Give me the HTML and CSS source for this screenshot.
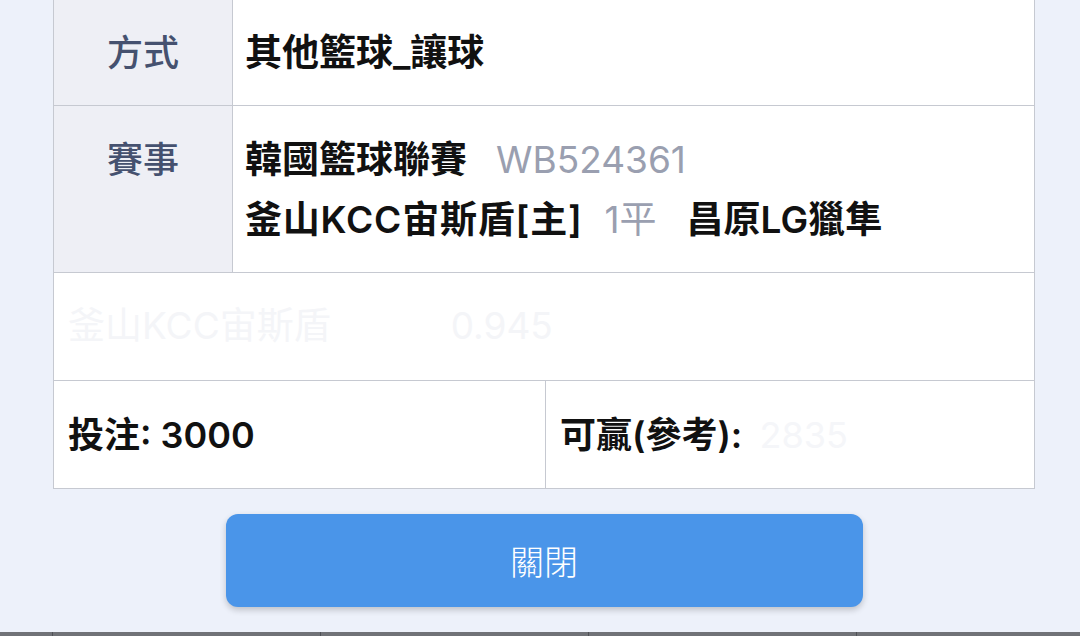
FILE: index.html
```html
<!DOCTYPE html>
<html lang="zh-Hant">
<head>
    <meta charset="UTF-8">
    <meta name="viewport" content="width=device-width, initial-scale=1.0">
    <title>注單詳情</title>
    <link rel="stylesheet" href="styles.css">
</head>
<body>
    <div class="page">
        <div class="sheet">
            <div class="row">
                <div class="label">方式</div>
                <div class="value">其他籃球_讓球</div>
            </div>
            <div class="row">
                <div class="label">賽事</div>
                <div class="value">
                    <div>韓國籃球聯賽<span class="muted">WB524361</span></div>
                    <div><span class="team">釜山KCC宙斯盾[主]</span><span class="muted odd">1平</span><span class="away">昌原LG獵隼</span></div>
                </div>
            </div>
            <div class="row full">
                <div class="faint">釜山KCC宙斯盾<span class="odds">0.945</span></div>
            </div>
            <div class="row split">
                <div class="cell">投注: 3000</div>
                <div class="cell">可贏(參考): <span class="faint-num">2835</span></div>
            </div>
        </div>
        <button class="close-btn">關閉</button>
    </div>
    <div class="tabbar">
        <span></span><span></span><span></span><span></span>
    </div>
</body>
</html>
```

FILE: styles.css
```css
body {
    margin: 0;
    height: 636px;
    overflow: hidden;
    background: #edf1fa;
    font-family: Inter, "Noto Sans CJK TC", sans-serif;
    color: #111;
}
.page {
    padding: 0 45px 0 53px;
}
.sheet {
    background: #fff;
    border: 1px solid #c6c9d1;
    border-top: none;
}
.row {
    display: grid;
    grid-template-columns: 179px 1fr;
    border-bottom: 1px solid #c6c9d1;
    font-size: 37px;
    line-height: 60px;
}
.row:first-child .label,
.row:first-child .value {
    padding-top: 23px;
    padding-bottom: 22px;
}
.label {
    background: #eeeff5;
    border-right: 1px solid #c6c9d1;
    color: #45516f;
    font-size: 36px;
    font-weight: 500;
    text-align: center;
    padding: 24px 0 22px;
}
.value {
    font-weight: 600;
    padding: 24px 12px 22px;
}
.team {
    letter-spacing: 0.8px;
}
.muted {
    color: #9a9fb0;
    font-weight: 400;
    margin-left: 29px;
}
.muted.odd {
    margin-left: 22px;
}
.away {
    margin-left: 30px;
}
.row.full {
    display: block;
    padding: 23px 14px 24px;
}
.faint {
    color: #f4f5f8;
    font-weight: 400;
}
.odds {
    margin-left: 120px;
}
.row.split {
    grid-template-columns: 492px 1fr;
    border-bottom: none;
}
.cell {
    font-size: 36px;
    font-weight: 600;
    padding: 24px 14px 23px;
}
.cell:first-child {
    border-right: 1px solid #c6c9d1;
}
.faint-num {
    color: #f5f6f9;
    font-weight: 400;
    margin-left: 8px;
}
.close-btn {
    display: block;
    width: 637px;
    height: 93px;
    margin: 25px auto 0;
    border: none;
    border-radius: 12px;
    background: #4a95e9;
    box-shadow: 0 3px 6px rgba(0, 0, 0, 0.2);
    color: #fff;
    font-family: "Noto Sans CJK TC", sans-serif;
    font-size: 34px;
    font-weight: 300;
}
.tabbar {
    display: grid;
    grid-template-columns: repeat(4, 268px);
    padding-left: 52px;
    margin-top: 25px;
    height: 5px;
    background: #707277;
}
.tabbar span {
    border-left: 1px solid #4f5156;
}
```
